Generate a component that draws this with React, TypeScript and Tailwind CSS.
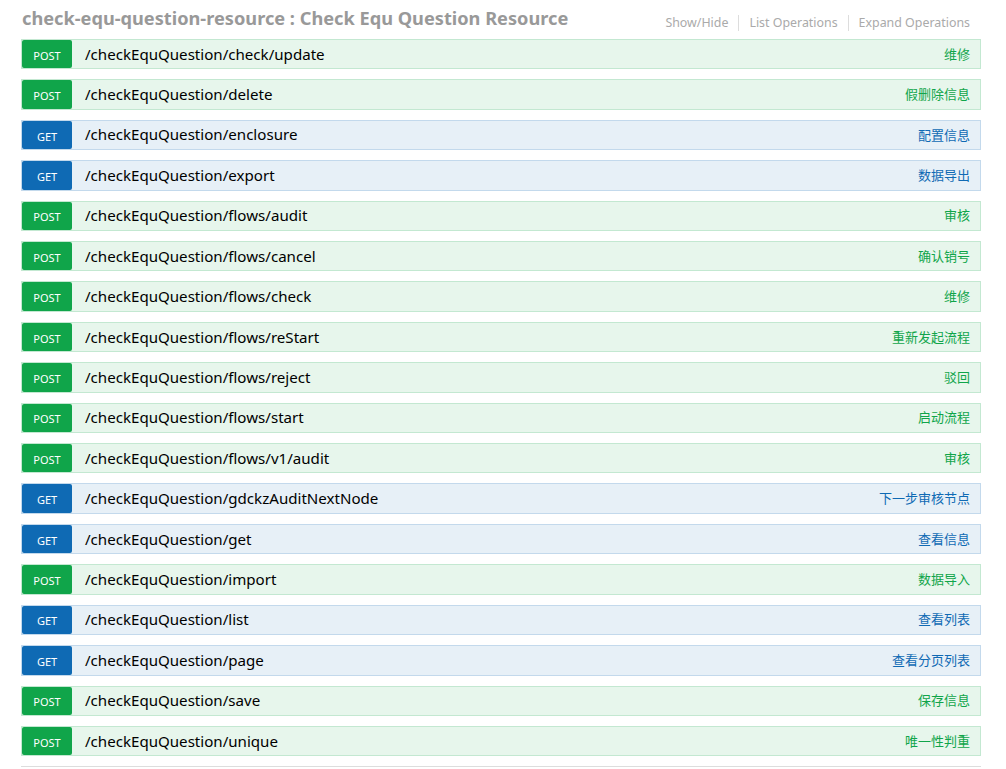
import React from "react";

type Op = { m: "POST" | "GET"; path: string; summary: string };

const ops: Op[] = [
  { m: "POST", path: "/checkEquQuestion/check/update", summary: "维修" },
  { m: "POST", path: "/checkEquQuestion/delete", summary: "假删除信息" },
  { m: "GET", path: "/checkEquQuestion/enclosure", summary: "配置信息" },
  { m: "GET", path: "/checkEquQuestion/export", summary: "数据导出" },
  { m: "POST", path: "/checkEquQuestion/flows/audit", summary: "审核" },
  { m: "POST", path: "/checkEquQuestion/flows/cancel", summary: "确认销号" },
  { m: "POST", path: "/checkEquQuestion/flows/check", summary: "维修" },
  { m: "POST", path: "/checkEquQuestion/flows/reStart", summary: "重新发起流程" },
  { m: "POST", path: "/checkEquQuestion/flows/reject", summary: "驳回" },
  { m: "POST", path: "/checkEquQuestion/flows/start", summary: "启动流程" },
  { m: "POST", path: "/checkEquQuestion/flows/v1/audit", summary: "审核" },
  { m: "GET", path: "/checkEquQuestion/gdckzAuditNextNode", summary: "下一步审核节点" },
  { m: "GET", path: "/checkEquQuestion/get", summary: "查看信息" },
  { m: "POST", path: "/checkEquQuestion/import", summary: "数据导入" },
  { m: "GET", path: "/checkEquQuestion/list", summary: "查看列表" },
  { m: "GET", path: "/checkEquQuestion/page", summary: "查看分页列表" },
  { m: "POST", path: "/checkEquQuestion/save", summary: "保存信息" },
  { m: "POST", path: "/checkEquQuestion/unique", summary: "唯一性判重" },
];

function Row({ op }: { op: Op }) {
  const post = op.m === "POST";
  return (
    <li
      className={
        "flex h-[30.41px] items-stretch border mb-[10px] " +
        (post ? "bg-[#e7f6ec] border-[#c3e8d1]" : "bg-[#e7f0f7] border-[#c3d9ec]")
      }
    >
      <span
        className={
          "w-[50px] shrink-0 rounded-[2px] flex items-center justify-center pt-[2px] text-[11px] text-white leading-none " +
          (post ? "bg-[#10a54a]" : "bg-[#0f6ab4]")
        }
      >
        {op.m}
      </span>
      <span className="pl-[13px] flex items-center text-[15.1px] text-black leading-none">{op.path}</span>
      <span
        className={
          "ml-auto pr-[10px] flex items-center text-[13px] leading-none " +
          (post ? "text-[#10a54a]" : "text-[#0f6ab4]")
        }
      >
        {op.summary}
      </span>
    </li>
  );
}

export default function App() {
  return (
    <div
      className="bg-white min-h-[769px] pl-[21px]"
      style={{ fontFamily: '"Noto Sans", "Noto Sans CJK SC", sans-serif' }}
    >
      <div className="w-[960px]">
        <div className="h-[39px] flex items-start justify-between">
          <h2 className="pl-[1px] pt-[5px] text-[18.2px] leading-[26px] font-bold text-[#999999]">
            check-equ-question-resource : Check Equ Question Resource
          </h2>
          <ul className="flex items-center mt-[15px] pr-[11px] text-[12.4px] leading-[16px] text-[#aaaaaa]">
            <li className="pr-[10px]">Show/Hide</li>
            <li className="px-[10px] border-l border-[#dddddd]">List Operations</li>
            <li className="pl-[10px] border-l border-[#dddddd]">Expand Operations</li>
          </ul>
        </div>
        <ul>
          {ops.map((op, i) => (
            <Row key={i} op={op} />
          ))}
        </ul>
        <div className="border-t border-[#dddddd] h-[10px]" />
      </div>
    </div>
  );
}
